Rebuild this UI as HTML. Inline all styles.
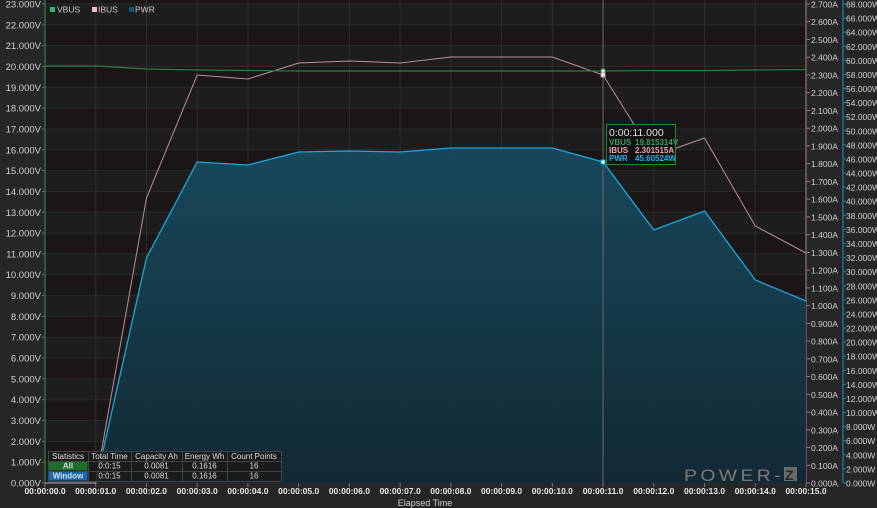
<!DOCTYPE html><html><head><meta charset="utf-8"><style>
html,body{margin:0;padding:0;background:#262626;width:877px;height:508px;overflow:hidden}
svg{display:block;font-family:"Liberation Sans",sans-serif}
</style></head><body>
<svg id="s" width="877" height="508" xmlns="http://www.w3.org/2000/svg"></svg>
<script>
const s=document.getElementById('s');let h='';
const L=45,R=806,T=4,B=483;
const X=t=>L+(R-L)*t/15, YV=v=>B-(B-T)*v/23;
h+=`<rect x="${L}" y="0" width="${R-L}" height="${B}" fill="#1a1616"/>`;
for(let v=0;v<23;v++){if(v%2==0)h+=`<rect x="${L}" y="${YV(v+1)}" width="${R-L}" height="${YV(v)-YV(v+1)}" fill="#1d1d1e"/>`;}
for(let v=0;v<=23;v++){h+=`<line x1="${L}" x2="${R}" y1="${YV(v)}" y2="${YV(v)}" stroke="#2b2b2b"/>`;
h+=`<text x="41" y="${YV(v)+3.5}" fill="#d0d0d0" font-size="9.5" text-anchor="end">${v}.000V</text>`;
h+=`<line x1="${L-3}" x2="${L}" y1="${YV(v)}" y2="${YV(v)}" stroke="#8a6a4a"/>`;}
for(let t=0;t<=15;t++){h+=`<line x1="${X(t)}" x2="${X(t)}" y1="0" y2="${B}" stroke="#2d2d2d"/>`;
h+=`<line x1="${X(t)}" x2="${X(t)}" y1="${B}" y2="${B+4}" stroke="#777"/>`;
h+=`<text x="${X(t)}" y="494" fill="#e8e8e8" font-size="8.5" font-weight="bold" text-anchor="middle">00:00:${String(t).padStart(2,'0')}.0</text>`;}
h+=`<text x="425" y="506" fill="#cfcfcf" font-size="9" text-anchor="middle">Elapsed Time</text>`;
for(let i=0;i<=27;i++){const y=B-(B-T)*i/27;h+=`<line x1="806" x2="810" y1="${y}" y2="${y}" stroke="#9a7a7a"/><text x="811" y="${y+3.5}" fill="#d0d0d0" font-size="8.5">${(i/10).toFixed(3)}A</text>`;}
for(let i=0;i<=34;i++){const y=B-(B-T)*i/34;h+=`<line x1="843" x2="846" y1="${y}" y2="${y}" stroke="#2a7fa0"/><text x="846" y="${y+3.5}" fill="#d0d0d0" font-size="8.5">${i*2}.000W</text>`;}
h+=`<line x1="806" x2="806" y1="0" y2="${B}" stroke="#7a6666" stroke-width="1.5"/><line x1="843" x2="843" y1="0" y2="${B}" stroke="#1f6f90" stroke-width="1.5"/><line x1="${L}" x2="${L}" y1="0" y2="${B}" stroke="#2f6a44" stroke-width="1.5"/>`;
const P=[483,483,258,162,165,152,151,152,148,148,148,162,230,211,280,301];
const I=[483,483,198,75,79,63,61,63,57,57,57,75,156,138,226,253];
const V=[66,66,69,70,70.5,71,71,71,71,71,71,71,70.5,70.5,70,69.5];
let pp=P.map((y,t)=>X(t)+','+y).join(' ');
h+=`<defs><linearGradient id="g" x1="0" y1="0" x2="0" y2="1"><stop offset="0" stop-color="#174a5e"/><stop offset="1" stop-color="#122a35"/></linearGradient></defs>`;
h+=`<polygon points="${pp} ${R},${B} ${L},${B}" fill="url(#g)" opacity="0.95"/>`;
h+=`<polyline points="${pp}" fill="none" stroke="#1aa8dc" stroke-width="1.3"/>`;
h+=`<polyline points="${I.map((y,t)=>X(t)+','+y).join(' ')}" fill="none" stroke="#b89096" stroke-width="1"/>`;
h+=`<polyline points="${V.map((y,t)=>X(t)+','+y).join(' ')}" fill="none" stroke="#2f7a4a" stroke-width="1.2"/>`;
h+=`<line x1="${X(11)}" x2="${X(11)}" y1="0" y2="${B}" stroke="#6a6a6a"/>`;
h+=`<rect x="${X(11)-2}" y="69" width="4" height="4" fill="#cfe" stroke="#2f7a4a"/><rect x="${X(11)-2}" y="73" width="4" height="4" fill="#fff" stroke="#b89096"/><rect x="${X(11)-2}" y="160" width="4" height="4" fill="#fff" stroke="#1aa8dc"/>`;
h+=`<rect x="606.5" y="124.5" width="69" height="40" fill="#121212" stroke="#1a8a2a"/>
<text x="609" y="136" fill="#e0e0e0" font-size="10.5">0:00:11.000</text>
<text x="609" y="145" fill="#3aa060" font-size="8" font-weight="bold">VBUS</text><text x="635" y="145" fill="#3aa060" font-size="8" font-weight="bold">19.815314V</text>
<text x="609" y="153" fill="#e8a8b0" font-size="8" font-weight="bold">IBUS</text><text x="635" y="153" fill="#e8a8b0" font-size="8" font-weight="bold">2.301515A</text>
<text x="609" y="161" fill="#22b4f0" font-size="8" font-weight="bold">PWR</text><text x="635" y="161" fill="#22b4f0" font-size="8" font-weight="bold">45.60524W</text>`;
h+=`<rect x="50" y="7" width="5" height="5" fill="#3ab070"/><text x="57" y="12.5" fill="#ccc" font-size="8.5">VBUS</text>
<rect x="92" y="7" width="5" height="5" fill="#f0b8c0"/><text x="98" y="12.5" fill="#ccc" font-size="8.5">IBUS</text>
<rect x="129" y="7" width="5" height="5" fill="#0a5a78"/><text x="135" y="12.5" fill="#ccc" font-size="8.5">PWR</text>`;
const cx=[48,88,131,182,227,281];const hd=['Statistics','Total Time','Capacity Ah','Energy Wh','Count Points'];
h+=`<rect x="48" y="451" width="233" height="30" fill="#1a1a1a" opacity="0.85"/>`;
h+=`<rect x="48.5" y="461.5" width="39" height="9" fill="#1e6e2e"/><rect x="48.5" y="471.5" width="39" height="9" fill="#1a6ab0"/>`;
for(let r=0;r<4;r++)h+=`<line x1="48" x2="281" y1="${451.5+r*10}" y2="${451.5+r*10}" stroke="#444"/>`;
cx.forEach(x=>h+=`<line x1="${x+.5}" x2="${x+.5}" y1="451" y2="481" stroke="#444"/>`);
hd.forEach((t,i)=>h+=`<text x="${(cx[i]+cx[i+1])/2}" y="459" fill="#ddd" font-size="8" text-anchor="middle">${t}</text>`);
[['All',466.5],['Window',476.5]].forEach(([n,y])=>{const v=[n,'0:0:15','0.0081','0.1616','16'];v.forEach((t,i)=>h+=`<text x="${(cx[i]+cx[i+1])/2}" y="${y+2}" fill="#ddd" font-size="8" text-anchor="middle" ${i==0?'font-weight="bold"':''}>${t}</text>`)});
h+=`<text x="684" y="481" fill="#7a7a7a" font-size="17" letter-spacing="3" textLength="100" lengthAdjust="spacingAndGlyphs">POWER-</text><rect x="784" y="467" width="13" height="14" fill="#6a6a6a"/><text x="785" y="480" fill="#262626" font-size="14" font-weight="bold">Z</text>`;
s.innerHTML=h;
</script></body></html>
